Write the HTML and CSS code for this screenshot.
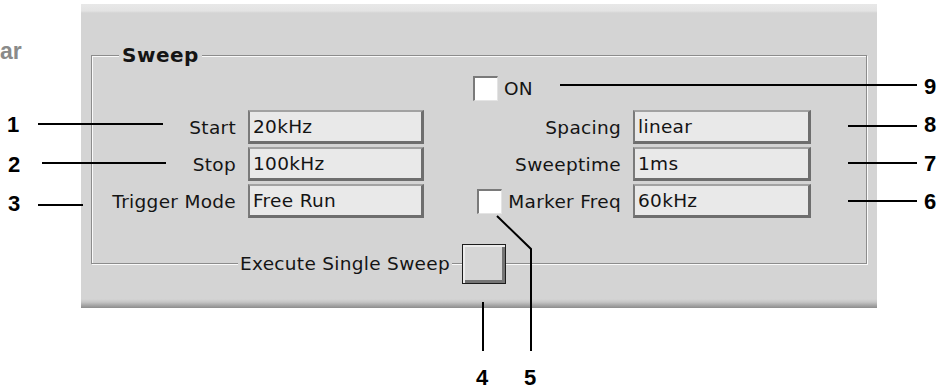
FILE: index.html
```html
<!DOCTYPE html>
<html lang="en">
<head>
  <meta charset="UTF-8" />
  <title>Sweep settings</title>
  <link rel="stylesheet" href="styles.css">
</head>
<body>
  <div class="page">
    <div class="side">ar</div>

    <div class="panel">
      <div class="group">
        <div class="legend">Sweep</div>

        <div class="fields">
          <label class="on"><span class="box"></span>ON</label>

          <div class="lbl">Start</div>
          <div class="val">20kHz</div>
          <div class="lbl">Spacing</div>
          <div class="val">linear</div>

          <div class="lbl">Stop</div>
          <div class="val">100kHz</div>
          <div class="lbl">Sweeptime</div>
          <div class="val">1ms</div>

          <div class="lbl">Trigger Mode</div>
          <div class="val">Free Run</div>
          <label class="lbl"><span class="box"></span>Marker Freq</label>
          <div class="val">60kHz</div>
        </div>

        <div class="exec">
          <span class="exec-text">Execute Single Sweep</span>
          <span class="btn"></span>
        </div>
      </div>
    </div>

    <!-- callout lines -->
    <svg class="callouts" width="952" height="391" viewBox="0 0 952 391">
      <g stroke="#000" stroke-width="2" fill="none">
        <path d="M38 124H163" />
        <path d="M42 163H166" />
        <path d="M38 205H83" />
        <path d="M560 85H917" />
        <path d="M848 126H917" />
        <path d="M848 163H917" />
        <path d="M848 201H917" />
        <path d="M483 302V351" />
        <path d="M497 216L531 249V351" />
      </g>
    </svg>

    <span class="num n1">1</span>
    <span class="num n2">2</span>
    <span class="num n3">3</span>
    <span class="num n4">4</span>
    <span class="num n5">5</span>
    <span class="num n6">6</span>
    <span class="num n7">7</span>
    <span class="num n8">8</span>
    <span class="num n9">9</span>
  </div>
</body>
</html>
```

FILE: styles.css
```css
body { margin: 0; background: #fff; font-family: "DejaVu Sans", Verdana, sans-serif; color: #141414; }

.page { position: relative; width: 952px; height: 391px; display: flex; align-items: flex-start; overflow: hidden; }

.side { flex: none; width: 81px; padding-top: 40px; font: bold 23px/22px "Liberation Sans", Arial, sans-serif; color: #8a8a8a; }

.panel {
  flex: none; box-sizing: border-box; width: 796px; height: 304px; margin-top: 4px; padding: 51px 10px 0;
  background: linear-gradient(#e8e8e8 0, #e3e3e3 7px, #d4d4d4 9px, #d4d4d4 calc(100% - 9px), #c6c6c6 calc(100% - 6px), #8c8c8c 100%);
  font-size: 18.5px; letter-spacing: 0.3px;
}

.group { box-sizing: border-box; width: 776px; height: 209px; border: 1px solid #8c8c8c; box-shadow: inset 1px 1px 0 #fafafa, 1px 1px 0 #fafafa; }

.legend { width: fit-content; margin: -11px 0 0 27px; padding: 0 3px; background: #d4d4d4; font-size: 20px; font-weight: bold; letter-spacing: 0.5px; line-height: 20px; }

.fields { margin-top: 11px; display: grid; grid-template-columns: 156px 176px 209px 178px; grid-template-rows: 31px; grid-auto-rows: 34px; row-gap: 3px; }

.on { grid-column: 3 / 5; align-self: start; height: 25px; margin-left: 49px; display: flex; align-items: center; gap: 6px; }

.lbl { display: flex; align-items: center; justify-content: flex-end; gap: 6px; padding-right: 12px; white-space: nowrap; }

.val {
  box-sizing: border-box; display: flex; align-items: center; padding-left: 3px; white-space: nowrap;
  background: #e9e9e9; border-style: solid; border-width: 2px 3px 3px 2px;
  border-color: #a2a2a2 #6e6e6e #6e6e6e #7a7a7a;
}

.box {
  box-sizing: border-box; width: 25px; height: 25px; flex: none; background: #fff;
  border-style: solid; border-width: 2px 1px 1px 2px; border-color: #7a7a7a #e4e4e4 #e4e4e4 #7a7a7a;
}

.exec { width: 414px; margin-top: 26px; display: flex; justify-content: flex-end; align-items: center; gap: 10px; }
.exec-text { padding: 0 2px; background: #d4d4d4; line-height: 20px; white-space: nowrap; }
.btn {
  box-sizing: border-box; width: 44px; height: 40px; flex: none; background: #d6d6d6; border: 1px solid #1c1c1c;
  box-shadow: inset 2px 2px 0 #ececec, inset -3px -3px 0 #747474;
}

.callouts { position: absolute; left: 0; top: 0; pointer-events: none; }

.num { position: absolute; font: bold 22px/22px "Liberation Sans", Arial, sans-serif; color: #000; }
.n1 { left: 7px; top: 114px; }
.n2 { left: 8px; top: 154px; }
.n3 { left: 8px; top: 193px; }
.n4 { left: 476px; top: 367px; }
.n5 { left: 524px; top: 367px; }
.n6 { left: 924px; top: 191px; }
.n7 { left: 924px; top: 153px; }
.n8 { left: 924px; top: 114px; }
.n9 { left: 924px; top: 76px; }
```
